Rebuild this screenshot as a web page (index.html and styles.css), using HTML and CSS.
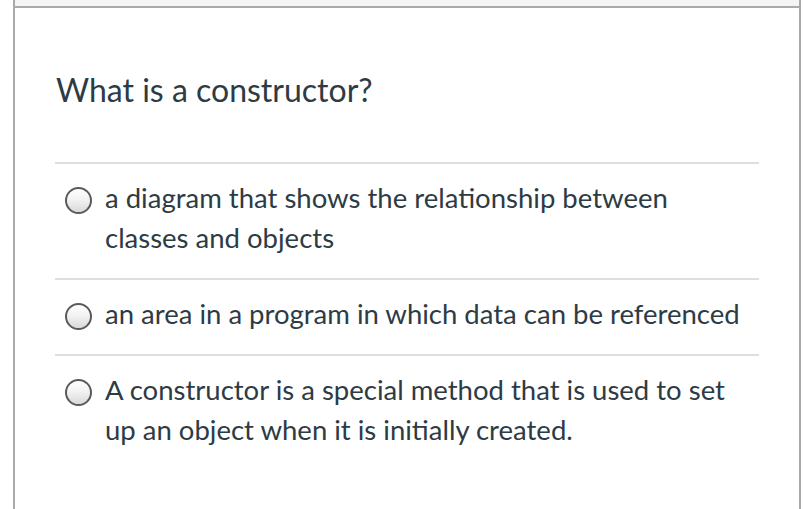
FILE: index.html
```html
<!DOCTYPE html>
<html>
<head>
<meta charset="utf-8">
<link rel="stylesheet" href="styles.css">
</head>
<body>
<div class="card">
  <div class="card-head"></div>
  <div class="card-body">
    <div class="question">What is a constructor?</div>
    <div class="answers">
      <label class="answer">
        <span class="radio"></span>
        <span class="answer-text">a diagram that shows the relationship between classes and objects</span>
      </label>
      <label class="answer">
        <span class="radio"></span>
        <span class="answer-text">an area in a program in which data can be referenced</span>
      </label>
      <label class="answer">
        <span class="radio"></span>
        <span class="answer-text">A constructor is a special method that is used to set up an object when it is initially created.</span>
      </label>
    </div>
  </div>
</div>
</body>
</html>
```

FILE: styles.css
```css
html, body {
  margin: 0;
  padding: 0;
  background: #ffffff;
}

body {
  font-family: Lato, "Open Sans", sans-serif;
  color: #2d3b45;
  width: 805px;
  height: 509px;
  overflow: hidden;
}

.card {
  margin-left: 13px;
  width: 788px;
  box-sizing: border-box;
  border-left: 2px solid #aaaaaa;
  border-right: 2px solid #aaaaaa;
  height: 509px;
}

.card-head {
  height: 6px;
  background: #f4f4f4;
  border-bottom: 2px solid #aaaaaa;
}

.card-body {
  padding: 0 40px;
}

.question {
  font-size: 32px;
  line-height: 40px;
  padding-top: 62px;
  padding-bottom: 52px;
  padding-left: 1px;
  border-bottom: 2px solid #dedede;
}

.answer {
  display: flex;
  align-items: flex-start;
  padding: 14px 0 20px 10px;
  border-bottom: 2px solid #dedede;
}

.answer:last-child {
  border-bottom: none;
}

.radio {
  flex: none;
  box-sizing: border-box;
  width: 27px;
  height: 27px;
  margin-top: 9px;
  border: 2px solid #5a5a5a;
  border-radius: 50%;
  background: linear-gradient(to bottom, #ffffff 0%, #f3f3f3 45%, #d9d9d9 100%);
}

.answer-text {
  margin-left: 13px;
  max-width: 640px;
  font-size: 27.5px;
  line-height: 40px;
}
```
